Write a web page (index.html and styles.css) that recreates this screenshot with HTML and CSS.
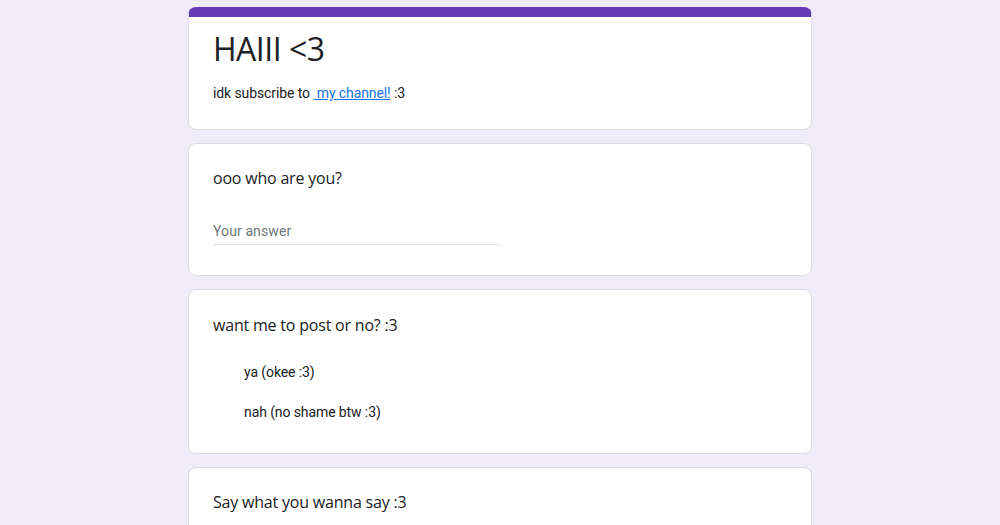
FILE: index.html
```html
<!DOCTYPE html>
<html>
<head>
<meta charset="utf-8">
<link rel="stylesheet" href="styles.css">
</head>
<body>
<main class="form">
  <section class="card card-head">
    <h1 class="title">HAIII &lt;3</h1>
    <p class="desc">idk subscribe to <a class="link" href="#">&nbsp;my channel!</a> :3</p>
  </section>
  <section class="card card-q card-text">
    <div class="question">ooo who are you?</div>
    <div class="answer">Your answer</div>
  </section>
  <section class="card card-q card-choice">
    <div class="question">want me to post or no? :3</div>
    <ul class="options">
      <li class="option">ya (okee :3)</li>
      <li class="option">nah (no shame btw :3)</li>
    </ul>
  </section>
  <section class="card card-q card-last">
    <div class="question">Say what you wanna say :3</div>
  </section>
</main>
</body>
</html>
```
FILE: styles.css
```css
html, body {
  margin: 0;
  padding: 0;
  background: #f0ebf8;
  height: 100%;
  overflow: hidden;
}
body {
  font-family: Roboto, "Liberation Sans", sans-serif;
  color: #202124;
}
.form {
  width: 624px;
  margin: 7px auto 0;
  display: flex;
  flex-direction: column;
  gap: 13px;
}
.card {
  background: #fff;
  border: 1px solid #dadce0;
  border-radius: 8px;
  box-sizing: border-box;
  padding: 0 24px;
}
.card-head {
  border-top: 10px solid #673ab7;
  height: 123px;
  padding-top: 10px;
}
.title {
  margin: 0;
  font-family: "Open Sans", Roboto, sans-serif;
  font-weight: 400;
  font-size: 32px;
  line-height: 44px;
  letter-spacing: -0.5px;
}
.desc {
  margin: 12px 0 0;
  font-size: 14px;
  line-height: 20px;
  letter-spacing: -0.1px;
  color: #202124;
}
.link {
  color: #1a73e8;
  text-decoration: underline;
}
.card-q {
  padding-top: 22px;
  padding-bottom: 24px;
}
.card-text { height: 133px; }
.card-choice { height: 165px; padding-top: 23px; }
.card-last { height: 120px; }
.question {
  font-family: "Open Sans", Roboto, sans-serif;
  font-size: 16px;
  line-height: 24px;
  letter-spacing: -0.2px;
}
.answer {
  margin-top: 31px;
  width: 288px;
  font-size: 14px;
  line-height: 20px;
  color: #70757a;
  letter-spacing: 0.1px;
  padding-bottom: 3px;
  border-bottom: 1px solid #e0e0e0;
}
.options {
  list-style: none;
  margin: 25px 0 0;
  padding: 0 0 0 31px;
  display: flex;
  flex-direction: column;
  gap: 20px;
}
.option {
  font-size: 14px;
  line-height: 20px;
  letter-spacing: -0.1px;
}
```
